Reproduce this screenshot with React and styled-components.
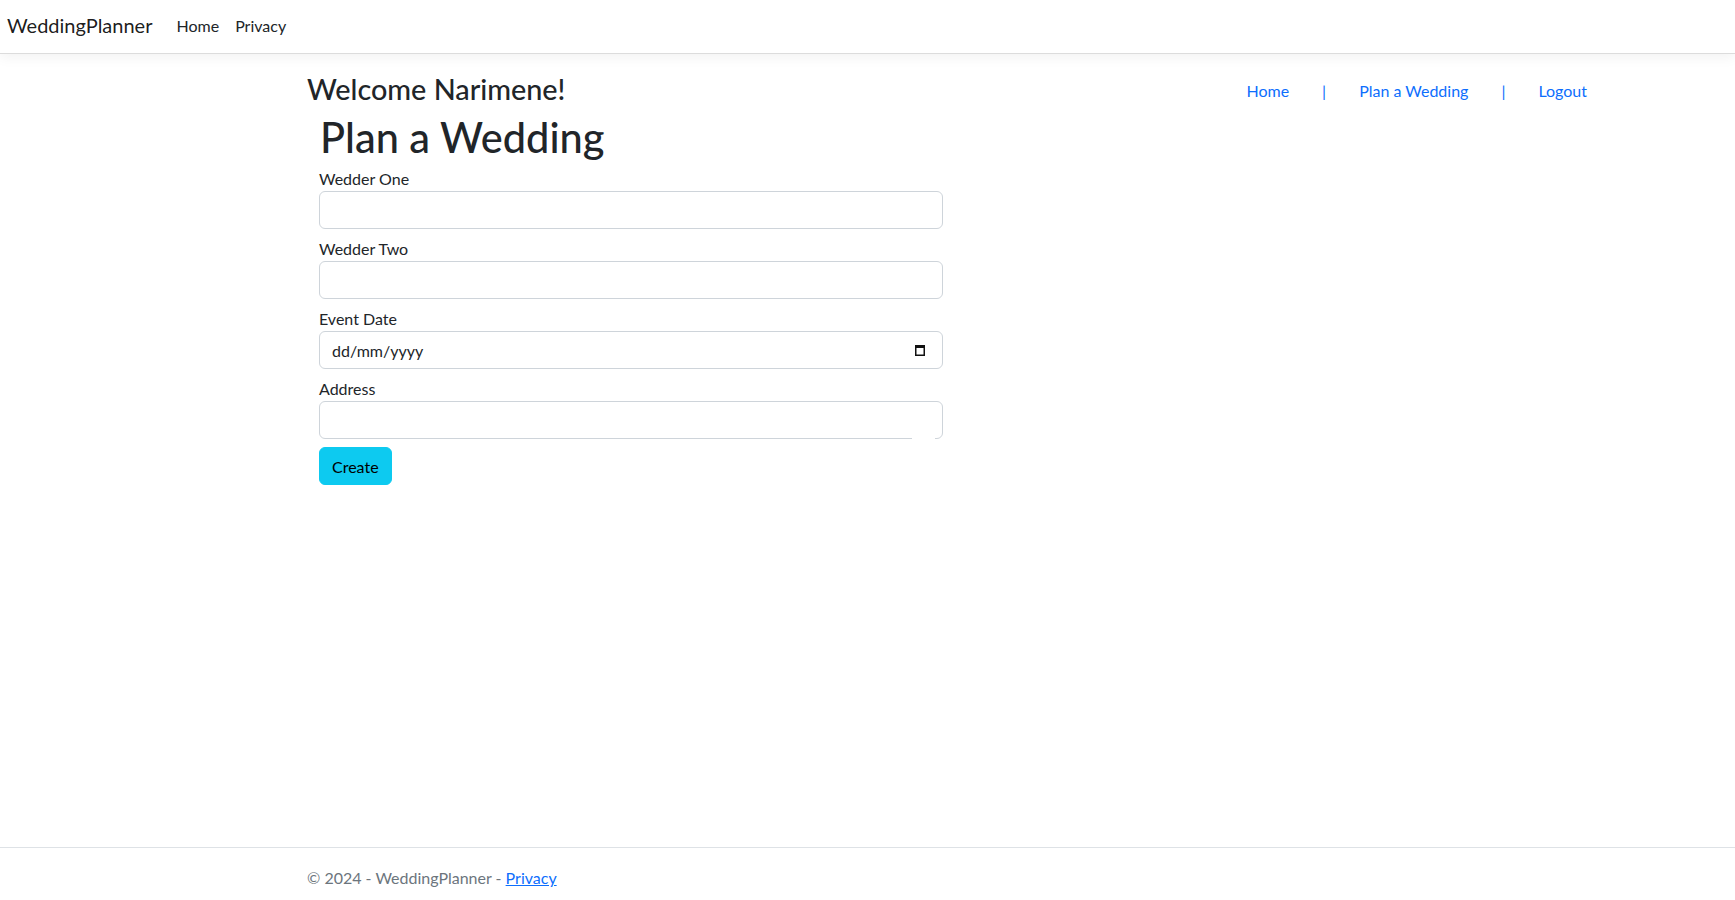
import styled, { createGlobalStyle } from "styled-components";

const GlobalStyle = createGlobalStyle`
    html, body {
        margin: 0;
        padding: 0;
        background: #fff;
    }

    body {
        font-family: "Segoe UI", Lato, "Noto Sans", sans-serif;
        font-size: 16px;
        line-height: 1.5;
        color: #212529;
    }

    * {
        box-sizing: border-box;
    }
`;

const App = () => {
    return (
        <Page>
            <GlobalStyle />
            <Navbar>
                <Brand href="#">WeddingPlanner</Brand>
                <NavList>
                    <NavLink href="#">Home</NavLink>
                    <NavLink href="#">Privacy</NavLink>
                </NavList>
            </Navbar>

            <Main>
                <Header>
                    <Welcome>Welcome Narimene!</Welcome>
                    <TopLinks>
                        <BlueLink href="#">Home</BlueLink>
                        <Pipe>|</Pipe>
                        <BlueLink href="#">Plan a Wedding</BlueLink>
                        <Pipe>|</Pipe>
                        <BlueLink href="#">Logout</BlueLink>
                    </TopLinks>
                </Header>

                <FormCol>
                    <Title>Plan a Wedding</Title>
                    <Field>
                        <Label>Wedder One</Label>
                        <Input type="text" />
                    </Field>
                    <Field>
                        <Label>Wedder Two</Label>
                        <Input type="text" />
                    </Field>
                    <Field>
                        <Label>Event Date</Label>
                        <InputWrap>
                            <Input type="text" placeholder="dd/mm/yyyy" />
                            <CalendarIcon width="10" height="12" viewBox="0 0 10 12">
                                <rect x="0.75" y="1.75" width="8.5" height="9.5" fill="none" stroke="#111" strokeWidth="1.5" />
                                <rect x="0" y="1" width="10" height="3" fill="#111" />
                            </CalendarIcon>
                        </InputWrap>
                    </Field>
                    <Field>
                        <Label>Address</Label>
                        <InputWrap>
                            <Input type="text" />
                            <BorderGap />
                        </InputWrap>
                    </Field>
                    <CreateButton type="button">Create</CreateButton>
                </FormCol>
            </Main>

            <Footer>
                <FooterInner>
                    &copy; 2024 - WeddingPlanner - <FooterLink href="#">Privacy</FooterLink>
                </FooterInner>
            </Footer>
        </Page>
    );
};

const Page = styled.div`
    min-height: 907px;
    display: flex;
    flex-direction: column;
`;

const Navbar = styled.nav`
    height: 54px;
    display: flex;
    align-items: center;
    padding: 0 7px;
    border-bottom: 1px solid #dcdcdc;
    box-shadow: 0 4px 12px rgba(0, 0, 0, 0.05);
    background: #fff;
`;

const Brand = styled.a`
    font-size: 20px;
    color: rgba(0, 0, 0, 0.9);
    text-decoration: none;
    margin-right: 16px;
    padding-bottom: 4px;
`;

const NavList = styled.div`
    display: flex;
    padding-bottom: 2px;
`;

const NavLink = styled.a`
    font-size: 16px;
    color: #212529;
    text-decoration: none;
    padding: 0 8px;
`;

const Main = styled.main`
    flex: 1;
    width: 1121px;
    margin-left: 307px;
`;

const Header = styled.div`
    display: flex;
    align-items: flex-start;
    justify-content: space-between;
    padding-top: 18px;
`;

const Welcome = styled.h3`
    margin: 0;
    font-size: 28.8px;
    font-weight: 500;
    line-height: 1.2;
`;

const TopLinks = styled.div`
    display: flex;
    align-items: center;
    margin-top: 7px;
    margin-right: -159px;
`;

const BlueLink = styled.a`
    color: #0d6efd;
    text-decoration: none;
    font-size: 16px;
`;

const Pipe = styled.span`
    color: #0d6efd;
    margin: 0 33px;
`;

const FormCol = styled.div`
    width: 636px;
    padding-left: 12px;
`;

const Title = styled.h1`
    margin: 6px 0 0 1px;
    font-size: 41.5px;
    font-weight: 500;
    line-height: 1.2;
`;

const Field = styled.div`
    margin-top: 8px;

    &:first-of-type {
        margin-top: 5px;
    }
`;

const Label = styled.label`
    display: block;
    font-size: 16px;
    line-height: 24px;
`;

const InputWrap = styled.div`
    position: relative;
`;

const Input = styled.input`
    display: block;
    width: 100%;
    height: 38px;
    padding: 6px 12px;
    font-family: inherit;
    font-size: 16px;
    color: #212529;
    background: #fff;
    border: 1px solid #ced4da;
    border-radius: 6px;
    outline: none;

    &::placeholder {
        color: #212529;
        opacity: 1;
    }
`;

const CalendarIcon = styled.svg`
    position: absolute;
    right: 18px;
    top: 13px;
`;

const BorderGap = styled.div`
    position: absolute;
    right: 8px;
    bottom: 0;
    width: 23px;
    height: 2px;
    background: #fff;
`;

const CreateButton = styled.button`
    margin-top: 8px;
    height: 38px;
    padding: 6px 12px;
    font-family: inherit;
    font-size: 16px;
    color: #000;
    background: #0dcaf0;
    border: 1px solid #0dcaf0;
    border-radius: 6px;
    cursor: pointer;
`;

const Footer = styled.footer`
    height: 60px;
    border-top: 1px solid #dee2e6;
    line-height: 60px;
    color: #6c757d;
`;

const FooterInner = styled.div`
    margin-left: 307px;
    white-space: nowrap;
`;

const FooterLink = styled.a`
    color: #0d6efd;
    text-decoration: underline;
`;

export default App;
